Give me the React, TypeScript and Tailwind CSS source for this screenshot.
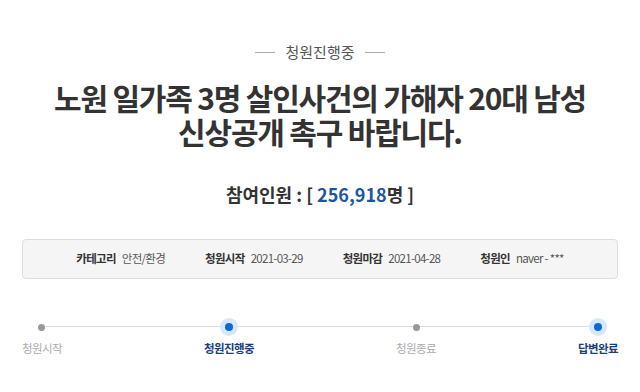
import React from "react";

const font = { fontFamily: '"Noto Sans CJK KR", "Noto Sans", sans-serif' };

function Dot({ active }: { active: boolean }) {
  if (active) {
    return (
      <div className="relative flex h-[18px] w-[18px] items-center justify-center rounded-full bg-[#d6e8fb]">
        <div className="h-[8px] w-[8px] rounded-full bg-[#0a6ad8]" />
      </div>
    );
  }
  return (
    <div className="flex h-[18px] w-[18px] items-center justify-center">
      <div className="h-[7px] w-[7px] rounded-full bg-[#999999]" />
    </div>
  );
}

const steps = [
  { label: "청원시작", active: false },
  { label: "청원진행중", active: true },
  { label: "청원종료", active: false },
  { label: "답변완료", active: true },
];

export default function App() {
  return (
    <div style={font} className="h-[392px] w-[640px] overflow-hidden bg-white">
      <div className="flex items-center justify-center gap-[10px] pt-[40px]">
        <div className="h-px w-[20px] bg-[#aaaaaa]" />
        <div className="text-[15px] leading-[24px] text-[#555555]">청원진행중</div>
        <div className="h-px w-[20px] bg-[#aaaaaa]" />
      </div>
      <div className="mt-[16px] text-center text-[30px] font-bold leading-[34px] tracking-[-1.2px] text-[#333333]">
        노원 일가족 3명 살인사건의 가해자 20대 남성
        <br />
        신상공개 촉구 바랍니다.
      </div>
      <div className="mt-[33px] text-center text-[18px] font-bold leading-[26px] text-[#333333]">
        참여인원 : [ <span className="text-[#1d55a3]">256,918</span>명 ]
      </div>
      <div className="mx-[22px] mt-[32px] flex h-[40px] items-center justify-center gap-[40px] rounded-[4px] border border-[#dddddd] bg-[#f5f5f5] text-[11.5px] tracking-[-0.7px]">
        <div className="flex gap-[6px]">
          <span className="font-bold text-[#333333]">카테고리</span>
          <span className="text-[#555555]">안전/환경</span>
        </div>
        <div className="flex gap-[6px]">
          <span className="font-bold text-[#333333]">청원시작</span>
          <span className="text-[#555555]">2021-03-29</span>
        </div>
        <div className="flex gap-[6px]">
          <span className="font-bold text-[#333333]">청원마감</span>
          <span className="text-[#555555]">2021-04-28</span>
        </div>
        <div className="flex gap-[6px]">
          <span className="font-bold text-[#333333]">청원인</span>
          <span className="text-[#555555]">naver - ***</span>
        </div>
      </div>
      <div className="relative mx-[22px] mt-[39px]">
        <div className="absolute left-[19px] right-[19px] top-[8px] h-px bg-[#dddddd]" />
        <div className="relative flex justify-between">
          {steps.map((s) => (
            <div key={s.label} className="flex flex-col items-center gap-[3px]">
              <Dot active={s.active} />
              <div
                className={
                  "text-[11.5px] leading-[18px] tracking-[-0.6px] " +
                  (s.active ? "font-bold text-[#1b3f78]" : "text-[#aaaaaa]")
                }
              >
                {s.label}
              </div>
            </div>
          ))}
        </div>
      </div>
    </div>
  );
}
